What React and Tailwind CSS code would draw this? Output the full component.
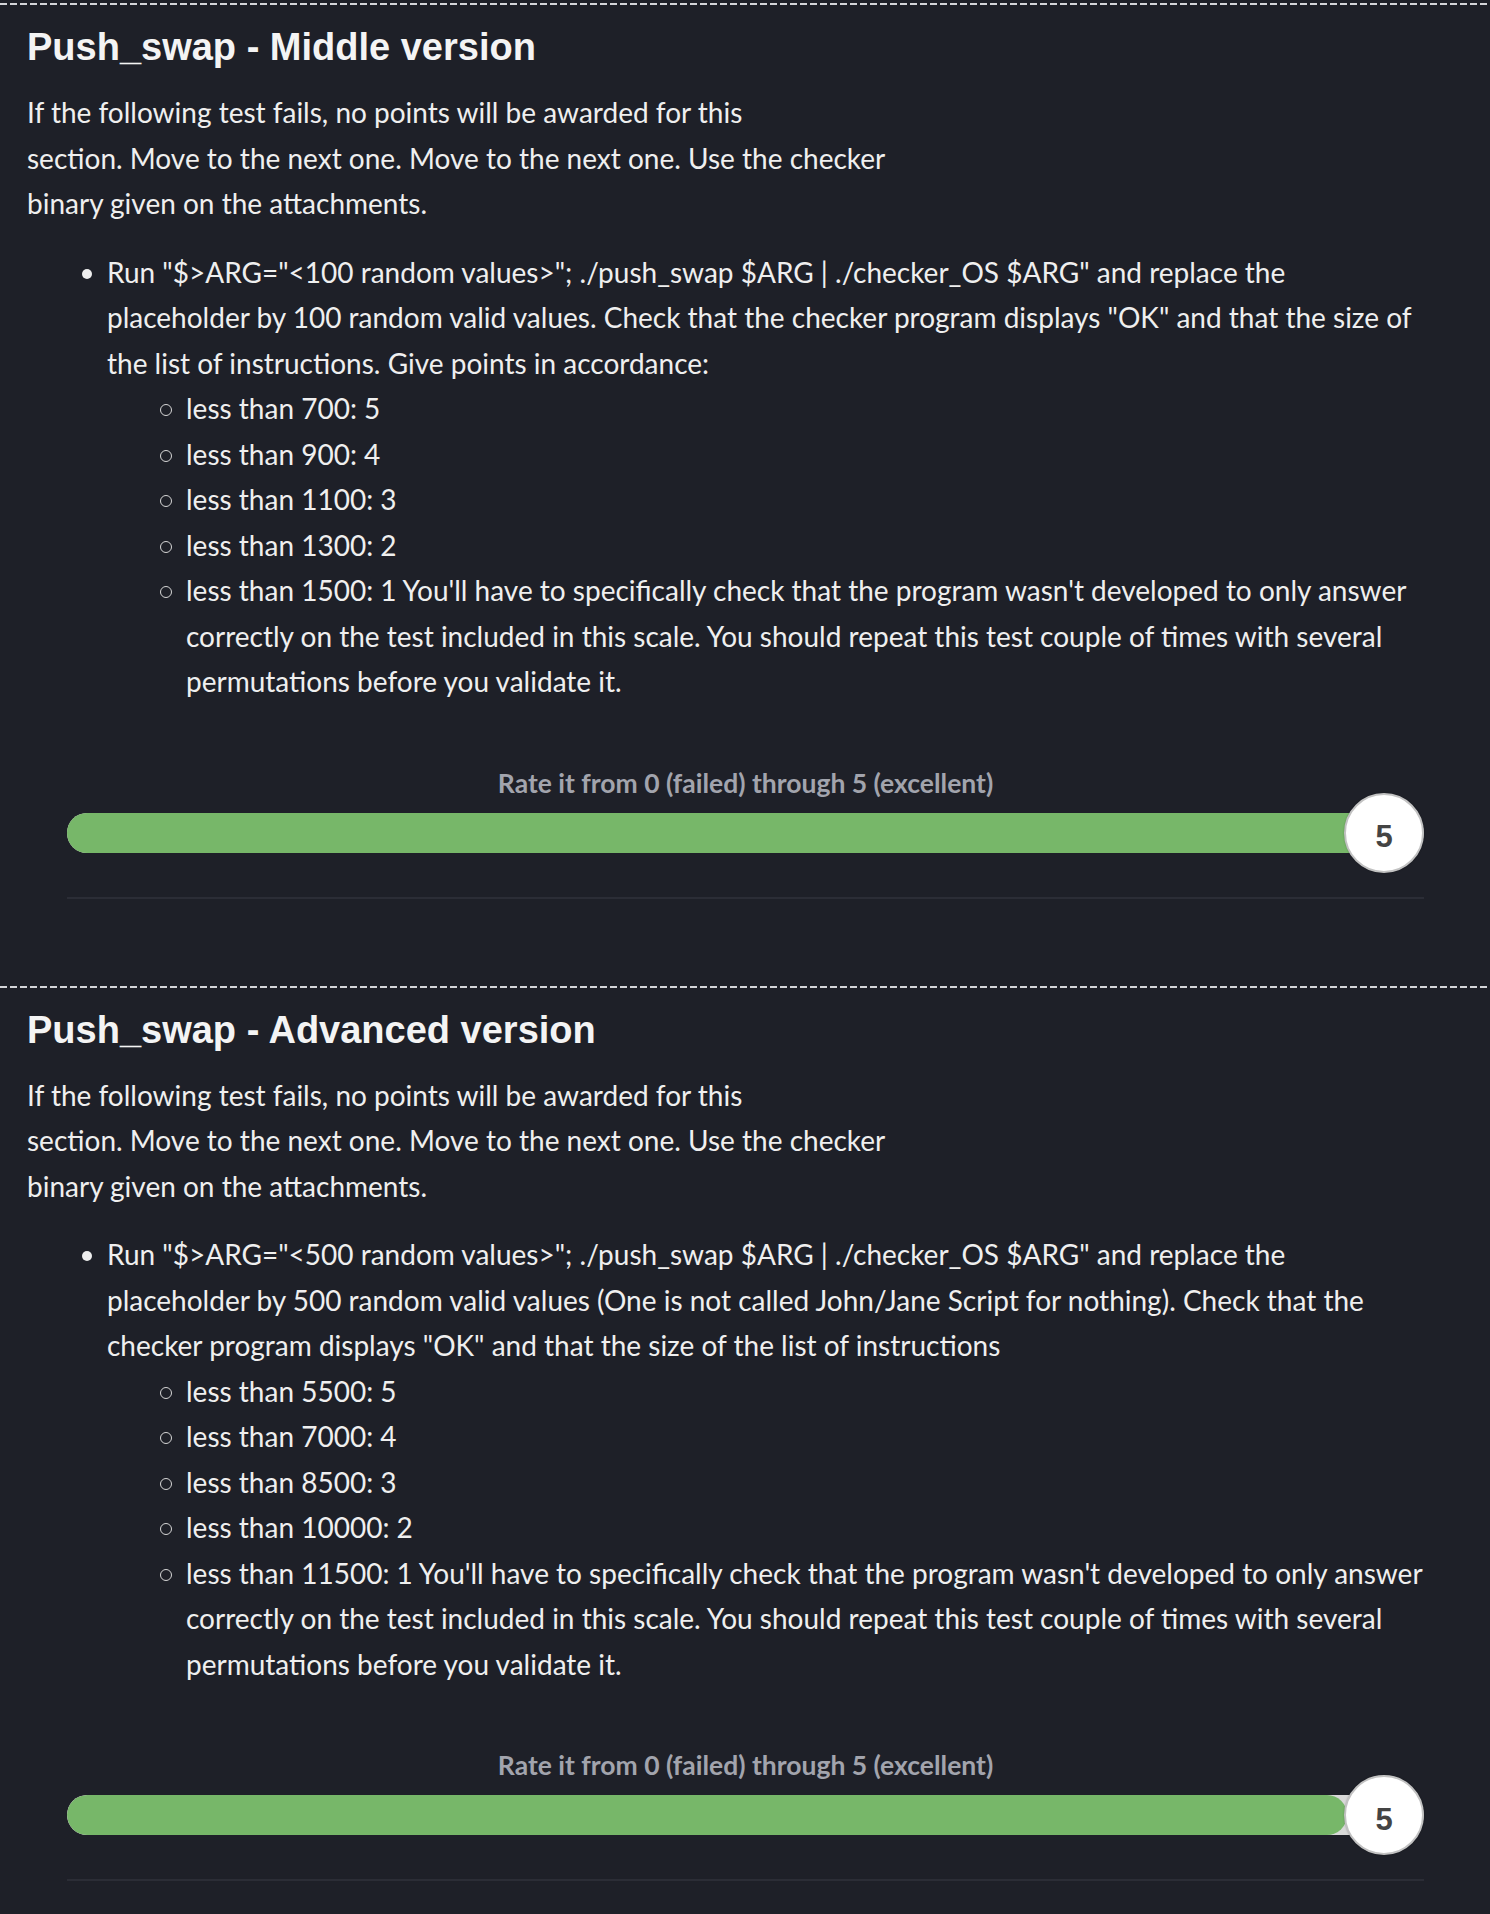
const sections = [
  {
    title: "Push_swap - Middle version",
    main: [
      'Run "$>ARG="<100 random values>"; ./push_swap $ARG | ./checker_OS $ARG" and replace the',
      'placeholder by 100 random valid values. Check that the checker program displays "OK" and that the size of',
      "the list of instructions. Give points in accordance:",
    ],
    subs: [
      "less than 700: 5",
      "less than 900: 4",
      "less than 1100: 3",
      "less than 1300: 2",
      "less than 1500: 1 You'll have to specifically check that the program wasn't developed to only answer correctly on the test included in this scale. You should repeat this test couple of times with several permutations before you validate it.",
    ],
    value: 5,
    fillRight: false,
  },
  {
    title: "Push_swap - Advanced version",
    main: [
      'Run "$>ARG="<500 random values>"; ./push_swap $ARG | ./checker_OS $ARG" and replace the',
      "placeholder by 500 random valid values (One is not called John/Jane Script for nothing). Check that the",
      'checker program displays "OK" and that the size of the list of instructions',
    ],
    subs: [
      "less than 5500: 5",
      "less than 7000: 4",
      "less than 8500: 3",
      "less than 10000: 2",
      "less than 11500: 1 You'll have to specifically check that the program wasn't developed to only answer correctly on the test included in this scale. You should repeat this test couple of times with several permutations before you validate it.",
    ],
    value: 5,
    fillRight: true,
  },
];

function Rating({ value, fillRight }) {
  return (
    <div className="mx-[40px]">
      <p className="text-center font-['Lato',sans-serif] font-bold text-[26.5px] leading-[20px] text-[#a2a4ad]">
        Rate it from 0 (failed) through 5 (excellent)
      </p>
      <div className="relative h-[80px] flex items-center">
        <div className="w-full h-[40px] rounded-full bg-[#d9d9d9] overflow-hidden">
          {fillRight ? (
            <div className="h-full w-[1280px] rounded-full bg-[#77b769]" />
          ) : (
            <div className="h-full w-[1317px] bg-[#77b769]" />
          )}
        </div>
        <div className="absolute right-0 top-0 w-[80px] h-[80px] rounded-full bg-white border-2 border-[#c2c2c2] shadow-[0_0_2px_rgba(0,0,0,0.25)] flex items-center justify-center">
          <span className="mt-[8px] font-['Liberation_Sans',sans-serif] font-bold text-[31px] leading-none text-[#444444]">
            {value}
          </span>
        </div>
      </div>
      <div className="mt-[24px] h-[2px] bg-[#2b2d36]" />
    </div>
  );
}

function Section({ s }) {
  return (
    <section className="mb-[87px]">
      <div className="h-[2px] bg-[repeating-linear-gradient(to_right,#d4d5d9_0px,#d4d5d9_7px,transparent_7px,transparent_10px)]" />
      <div className="pl-[27px] pr-[26px] pt-[19px]">
        <h2 className="font-['Liberation_Sans',sans-serif] font-bold text-[38px] leading-[46px] text-[#f4f4f4]">
          {s.title}
        </h2>
        <div className="font-['Lato',sans-serif] text-[28px] leading-[45.5px] text-[#efefef]">
          <p className="mt-[20px]">
            If the following test fails, no points will be awarded for this
            <br />
            section. Move to the next one. Move to the next one. Use the checker
            <br />
            binary given on the attachments.
          </p>
          <ul className="mt-[23px]">
            <li className="flex">
              <div className="w-[80px] shrink-0 pl-[55px] pt-[19px]">
                <div className="w-[10px] h-[10px] rounded-full bg-[#eeeeee]" />
              </div>
              <div className="flex-1">
                <p>
                  {s.main.map((line, i) => (
                    <span key={i}>
                      {line}
                      {i < s.main.length - 1 && <br />}
                    </span>
                  ))}
                </p>
                <ul>
                  {s.subs.map((t) => (
                    <li key={t} className="flex">
                      <div className="w-[79px] shrink-0 pl-[53px] pt-[18px]">
                        <div className="w-[12px] h-[12px] rounded-full border-[1.5px] border-[#d6d6d6]" />
                      </div>
                      <p className="flex-1">{t}</p>
                    </li>
                  ))}
                </ul>
              </div>
            </li>
          </ul>
        </div>
        <div className="mt-[68px]">
          <Rating value={s.value} fillRight={s.fillRight} />
        </div>
      </div>
    </section>
  );
}

export default function App() {
  return (
    <div className="min-h-[1914px] bg-[#1e2028] pt-[3px]">
      {sections.map((s) => (
        <Section key={s.title} s={s} />
      ))}
    </div>
  );
}
